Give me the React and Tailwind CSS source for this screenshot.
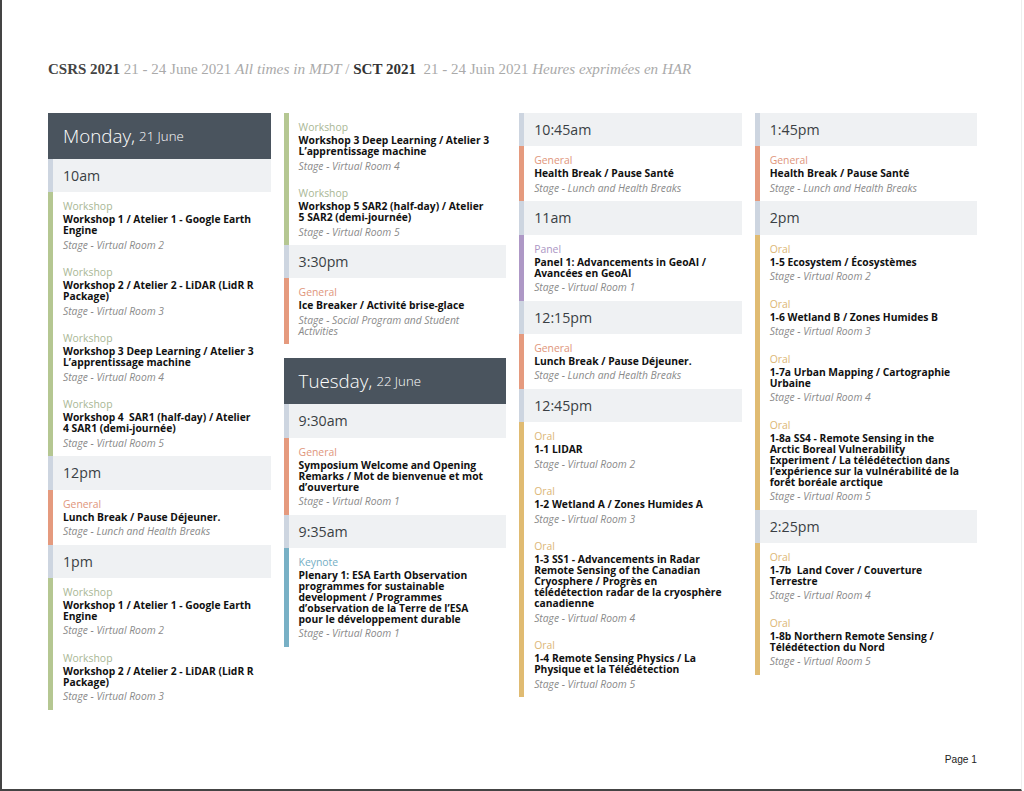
const openSans = { fontFamily: '"Open Sans", sans-serif' };

const kinds = {
  Workshop: { bar: 'border-[#b5c792]', label: 'text-[#a9b795]' },
  General: { bar: 'border-[#e59a7e]', label: 'text-[#e0957b]' },
  Panel: { bar: 'border-[#ae98c6]', label: 'text-[#ab96c4]' },
  Oral: { bar: 'border-[#e0bb72]', label: 'text-[#dcb676]' },
  Keynote: { bar: 'border-[#78b0c5]', label: 'text-[#74aec4]' },
};

const lunch = 'Stage - Lunch and Health Breaks';
const room = (n) => `Stage - Virtual Room ${n}`;

const columns = [
  [
    { day: 'Monday,', date: '21 June' },
    { time: '10am' },
    { kind: 'Workshop', title: 'Workshop 1 / Atelier 1 - Google Earth Engine', stage: room(2) },
    { kind: 'Workshop', title: 'Workshop 2 / Atelier 2 - LiDAR (LidR R Package)', stage: room(3) },
    { kind: 'Workshop', title: 'Workshop 3 Deep Learning / Atelier 3 L’apprentissage machine', stage: room(4) },
    { kind: 'Workshop', title: 'Workshop 4  SAR1 (half-day) / Atelier 4 SAR1 (demi-journée)', stage: room(5) },
    { time: '12pm' },
    { kind: 'General', title: 'Lunch Break / Pause Déjeuner.', stage: lunch },
    { time: '1pm' },
    { kind: 'Workshop', title: 'Workshop 1 / Atelier 1 - Google Earth Engine', stage: room(2) },
    { kind: 'Workshop', title: 'Workshop 2 / Atelier 2 - LiDAR (LidR R Package)', stage: room(3) },
  ],
  [
    { kind: 'Workshop', title: 'Workshop 3 Deep Learning / Atelier 3 L’apprentissage machine', stage: room(4) },
    { kind: 'Workshop', title: 'Workshop 5 SAR2 (half-day) / Atelier 5 SAR2 (demi-journée)', stage: room(5) },
    { time: '3:30pm' },
    { kind: 'General', title: 'Ice Breaker / Activité brise-glace', stage: 'Stage - Social Program and Student Activities' },
    { day: 'Tuesday,', date: '22 June', gap: true },
    { time: '9:30am' },
    { kind: 'General', title: 'Symposium Welcome and Opening Remarks / Mot de bienvenue et mot d’ouverture', stage: room(1) },
    { time: '9:35am' },
    { kind: 'Keynote', title: 'Plenary 1: ESA Earth Observation programmes for sustainable development / Programmes d’observation de la Terre de l’ESA pour le développement durable', stage: room(1) },
  ],
  [
    { time: '10:45am' },
    { kind: 'General', title: 'Health Break / Pause Santé', stage: lunch },
    { time: '11am' },
    { kind: 'Panel', title: 'Panel 1: Advancements in GeoAI / Avancées en GeoAI', stage: room(1) },
    { time: '12:15pm' },
    { kind: 'General', title: 'Lunch Break / Pause Déjeuner.', stage: lunch },
    { time: '12:45pm' },
    { kind: 'Oral', title: '1-1 LIDAR', stage: room(2) },
    { kind: 'Oral', title: '1-2 Wetland A / Zones Humides A', stage: room(3) },
    { kind: 'Oral', title: '1-3 SS1 - Advancements in Radar Remote Sensing of the Canadian Cryosphere / Progrès en télédétection radar de la cryosphère canadienne', stage: room(4) },
    { kind: 'Oral', title: '1-4 Remote Sensing Physics / La Physique et la Télédétection', stage: room(5) },
  ],
  [
    { time: '1:45pm' },
    { kind: 'General', title: 'Health Break / Pause Santé', stage: lunch },
    { time: '2pm' },
    { kind: 'Oral', title: '1-5 Ecosystem / Écosystèmes', stage: room(2) },
    { kind: 'Oral', title: '1-6 Wetland B / Zones Humides B', stage: room(3) },
    { kind: 'Oral', title: '1-7a Urban Mapping / Cartographie Urbaine', stage: room(4) },
    { kind: 'Oral', title: '1-8a SS4 - Remote Sensing in the Arctic Boreal Vulnerability Experiment / La télédétection dans l’expérience sur la vulnérabilité de la forêt boréale arctique', stage: room(5) },
    { time: '2:25pm' },
    { kind: 'Oral', title: '1-7b  Land Cover / Couverture Terrestre', stage: room(4) },
    { kind: 'Oral', title: '1-8b Northern Remote Sensing / Télédétection du Nord', stage: room(5) },
  ],
];

const DayHeader = ({ day, date, gap }) => (
  <div className={`h-[46px] bg-[#4a545e] pl-[15px] flex items-center text-white font-light ${gap ? 'mt-[14px]' : ''}`}>
    <span className="text-[18.8px]">{day}</span>
    <span className="text-[13.2px] ml-[4px] mt-[2px]">{date}</span>
  </div>
);

const TimeRow = ({ time }) => (
  <div className="h-[33.3px] bg-[#eff1f3] border-l-[5px] border-[#cdd5e0] pl-[10px] flex items-center text-[14.2px] text-[#3a3f44]">
    {time}
  </div>
);

const Event = ({ kind, title, stage }) => (
  <div className={`border-l-[5px] ${kinds[kind].bar} pl-[10px] pr-[16px] pt-[7px] pb-[7.5px]`}>
    <div className={`text-[10.4px] leading-[15px] ${kinds[kind].label}`}>{kind}</div>
    <div className="text-[10.3px] leading-[11px] font-bold text-[#111] whitespace-pre-wrap">{title}</div>
    <div className="text-[10.3px] leading-[11px] italic text-[#8a8a8a] mt-[3.5px]">{stage}</div>
  </div>
);

export default function App() {
  return (
    <div className="h-[791px] w-[1022px] bg-white border-l-2 border-l-[#444] border-r border-r-[#eee] border-b-2 border-b-[#444] flex flex-col overflow-hidden" style={openSans}>
      <h1 className="pl-[46px] pt-[60px] h-[113px] text-[15px] leading-[18px] text-[#aaa] whitespace-pre font-normal font-['Liberation_Serif',serif]">
        <b className="text-[#444]">CSRS 2021</b> 21 - 24 June 2021 <i className="text-[15.4px]">All times in MDT</i> / <b className="text-[#333]">SCT 2021</b>  21 - 24 Juin 2021 <i className="text-[15.1px]">Heures exprimées en HAR</i>
      </h1>
      <div className="grid grid-cols-[repeat(4,222.7px)] gap-x-[12.9px] pl-[46px] items-start">
        {columns.map((col, i) => (
          <div key={i}>
            {col.map((item, j) => {
              if (item.day) return <DayHeader key={j} {...item} />;
              if (item.time) return <TimeRow key={j} time={item.time} />;
              return <Event key={j} {...item} />;
            })}
          </div>
        ))}
      </div>
      <div className="mt-auto pb-[23px] pr-[44px] text-right text-[10.2px] leading-[13px] text-[#222] font-['Liberation_Sans',sans-serif]">Page 1</div>
    </div>
  );
}
